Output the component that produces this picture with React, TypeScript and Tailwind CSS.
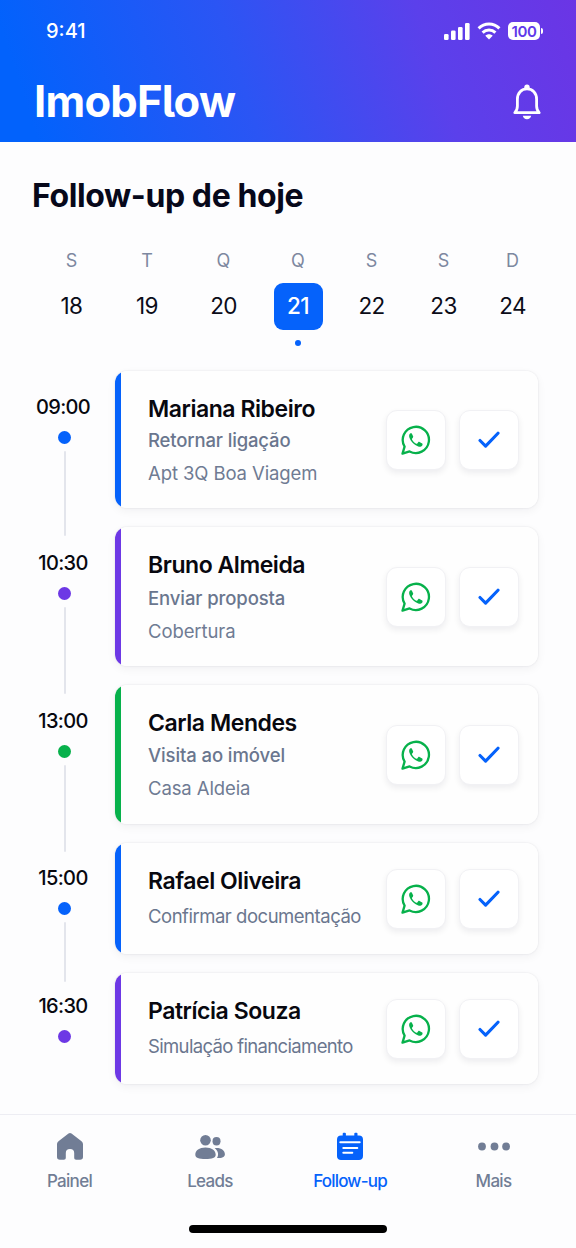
import clsx from "clsx";
import type { ReactNode } from "react";

type Task = {
  time: string;
  name: string;
  action: string;
  place?: string;
  row: string;
  head: string;
  actionClass: string;
  bar: string;
  dot: string;
};

const DAYS = [
  { letter: "S", day: 18, width: "w-[75px]" },
  { letter: "T", day: 19, width: "w-[76px]" },
  { letter: "Q", day: 20, width: "w-[77px]" },
  { letter: "Q", day: 21, width: "w-[72px]", active: true },
  { letter: "S", day: 22, width: "w-[75px]" },
  { letter: "S", day: 23, width: "w-[69px]" },
  { letter: "D", day: 24, width: "w-[69px]" },
];

const TASKS: Task[] = [
  {
    time: "09:00",
    name: "Mariana Ribeiro",
    action: "Retornar ligação",
    place: "Apt 3Q Boa Viagem",
    row: "h-[137px]",
    head: "pt-6",
    actionClass: "mt-[5px] font-medium tracking-[-0.15px]",
    bar: "bg-[#0562fb]",
    dot: "bg-[#0562fb]",
  },
  {
    time: "10:30",
    name: "Bruno Almeida",
    action: "Enviar proposta",
    place: "Cobertura",
    row: "h-[139px]",
    head: "pt-6",
    actionClass: "mt-[7px] font-medium tracking-[-0.1px]",
    bar: "bg-[#6d38e5]",
    dot: "bg-[#6d38e5]",
  },
  {
    time: "13:00",
    name: "Carla Mendes",
    action: "Visita ao imóvel",
    place: "Casa Aldeia",
    row: "h-[139px]",
    head: "pt-6",
    actionClass: "mt-[6px] font-medium tracking-[-0.1px]",
    bar: "bg-[#07b14b]",
    dot: "bg-[#07b14b]",
  },
  {
    time: "15:00",
    name: "Rafael Oliveira",
    action: "Confirmar documentação",
    row: "h-[111px]",
    head: "pt-[23px]",
    actionClass: "mt-[9px] tracking-[-0.48px]",
    bar: "bg-[#0562fb]",
    dot: "bg-[#0562fb]",
  },
  {
    time: "16:30",
    name: "Patrícia Souza",
    action: "Simulação financiamento",
    row: "h-[111px]",
    head: "pt-[21px]",
    actionClass: "mt-[9px] tracking-[-0.65px]",
    bar: "bg-[#6d38e5]",
    dot: "bg-[#6d38e5]",
  },
];

function StatusIcons() {
  return (
    <div className="flex items-center text-white">
      <svg width="26" height="17" viewBox="0 0 26 17" fill="currentColor">
        <rect x="0" y="11" width="4.6" height="6" rx="1.3" />
        <rect x="7" y="7.5" width="4.6" height="9.5" rx="1.3" />
        <rect x="14" y="4" width="4.6" height="13" rx="1.3" />
        <rect x="21" y="0" width="4.6" height="17" rx="1.3" />
      </svg>
      <svg
        className="ml-[7px]"
        width="24"
        height="18"
        viewBox="0 0 24 18"
        fill="none"
        stroke="currentColor"
        strokeWidth="3"
      >
        <path d="M1.600 6.400C7.400.6 16.600.6 22.400 6.400" />
        <path d="M5.600 10.600c3.600-3.500 9.200-3.500 12.800 0" />
        <path
          d="M12 17.400 8.300 13.800c2-2 5.400-2 7.400 0Z"
          fill="currentColor"
          stroke="none"
        />
      </svg>
      <div className="ml-[7px] flex h-[18px] w-8 items-center justify-center rounded-[5px] bg-white text-[15px] leading-none font-semibold tracking-[-0.4px] text-[#6039ea]">
        100
      </div>
      <div className="ml-px h-[6px] w-[2px] rounded-r-full bg-white" />
    </div>
  );
}

function BellIcon() {
  return (
    <svg width="30" height="36" viewBox="0 0 30 36" fill="none">
      <circle cx="15" cy="3.300" r="2.700" fill="white" />
      <path
        d="M2.800 28.700c1.600-1.600 2.600-3.700 2.600-6.700v-6.800C5.400 9 9.500 4.900 15 4.900s9.600 4.100 9.600 10.300V22c0 3 1 5.100 2.600 6.700Z"
        stroke="white"
        strokeWidth="2.800"
        strokeLinejoin="round"
      />
      <path d="M10.800 31.800h8.400c-.5 2.100-2 3.400-4.200 3.400s-3.700-1.300-4.200-3.400Z" fill="white" />
    </svg>
  );
}

function WhatsAppIcon() {
  return (
    <svg width="30" height="30" viewBox="0 0 30 30" fill="none">
      <path
        d="M1.500 28.600 3.600 21.600A13.100 13.100 0 1 1 8.600 26.400Z"
        stroke="#07b14b"
        strokeWidth="2.300"
        strokeLinejoin="round"
      />
      <path
        d="M10.800 8.600c-.4-.6-1.200-.6-1.700-.1-1 1-1.200 2.600-.7 4.100 1.400 4.200 4.800 7.600 8.900 8.900 1.500.5 3.200.1 4-1.100.4-.7.4-1.500-.1-1.900l-2.700-1.500c-.5-.3-1-.1-1.300.3l-.9 1.200c-.3.3-.6.4-1 .2-1.900-.9-3.400-2.500-4.300-4.300-.2-.4-.1-.7.200-1l.8-1c.3-.4.3-.8.1-1.200Z"
        fill="#07b14b"
      />
    </svg>
  );
}

function CheckIcon() {
  return (
    <svg width="22" height="18" viewBox="0 0 22 18" fill="none">
      <path
        d="m2 9.500 5.600 5.600L20 2.200"
        stroke="#0562fb"
        strokeWidth="3.100"
        strokeLinecap="round"
        strokeLinejoin="round"
      />
    </svg>
  );
}

function IconButton({ label, children }: { label: string; children: ReactNode }) {
  return (
    <button
      aria-label={label}
      className="flex size-[60px] items-center justify-center rounded-[11px] border border-[#f1f1f4] bg-white shadow-[0_3px_6px_rgba(20,20,40,0.07)]"
    >
      {children}
    </button>
  );
}

function TaskRow({ task, last }: { task: Task; last: boolean }) {
  return (
    <div className={clsx("flex", task.row)}>
      {/* Timeline */}
      <div className={clsx("flex w-[61px] flex-col items-center", task.head)}>
        <span className="pr-[3px] text-[20px] leading-6 font-medium tracking-[-0.65px] text-[#07080f]">
          {task.time}
        </span>
        <span className={clsx("mt-3 size-[13px] shrink-0 rounded-full", task.dot)} />
        {!last && (
          <span className="mt-[7px] -mb-[28px] w-[2px] flex-1 rounded-full bg-[#e3e5ec]" />
        )}
      </div>

      {/* Card */}
      <div className="ml-[20px] flex w-[423px] overflow-hidden rounded-xl shadow-[0_3px_10px_rgba(20,20,40,0.05),0_0_2px_rgba(20,20,40,0.12)]">
        <div className={clsx("w-[6px] shrink-0", task.bar)} />
        <div className="flex flex-1 items-center bg-[#fefefe] pr-[19.5px] pl-[27px]">
          <div className="flex-1 self-start pt-[23.5px] whitespace-nowrap">
            <h2 className="text-[23px] leading-7 font-semibold tracking-[-0.45px] text-[#08080f]">
              {task.name}
            </h2>
            <p
              className={clsx(
                "text-[18.5px] leading-6 text-[#6a768e]",
                task.actionClass
              )}
            >
              {task.action}
            </p>
            {task.place && (
              <p className="mt-[9px] text-[18.5px] leading-6 tracking-[-0.1px] text-[#6f7b93]">
                {task.place}
              </p>
            )}
          </div>
          <div className="flex gap-[13px] pt-px">
            <IconButton label="WhatsApp">
              <WhatsAppIcon />
            </IconButton>
            <IconButton label="Concluir">
              <CheckIcon />
            </IconButton>
          </div>
        </div>
      </div>
    </div>
  );
}

function NavItem({
  label,
  width,
  active,
  children,
}: {
  label: string;
  width: string;
  active?: boolean;
  children: ReactNode;
}) {
  return (
    <button
      className={clsx(
        "flex flex-col items-center",
        width,
        active ? "text-[#0562fb]" : "text-[#717d95]"
      )}
    >
      <svg width="32" height="30" viewBox="0 0 32 30" fill="currentColor">
        {children}
      </svg>
      <span
        className={clsx(
          "mt-[7px] text-[17px] leading-6 font-medium",
          active ? "tracking-[-0.8px]" : "tracking-[-0.7px]"
        )}
      >
        {label}
      </span>
    </button>
  );
}

function BottomNav() {
  return (
    <nav className="mt-[30px] flex h-[134px] flex-col items-center border-t border-[#ededf3]">
      <div className="flex w-full pt-[17px]">
        <NavItem label="Painel" width="w-[139px]">
          <path d="M14.500 1.500a2.600 2.600 0 0 1 3 0l9.700 7.400c1.200.9 1.800 2 1.800 3.400V25c0 1.700-1.100 2.800-2.800 2.800h-4c-1.300 0-2-.7-2-2V21c0-2.500-1.400-4-4.200-4s-4.200 1.500-4.200 4v4.800c0 1.300-.7 2-2 2h-4C4.100 27.800 3 26.700 3 25V12.300c0-1.400.6-2.500 1.800-3.400Z" />
        </NavItem>
        <NavItem label="Leads" width="w-[142px]">
          <circle cx="11.500" cy="8.300" r="5.300" />
          <ellipse cx="22.500" cy="9.200" rx="4" ry="4.200" />
          <path d="M11.500 15.500c6.200 0 10.200 3 10.200 7.300 0 3-3.500 4.200-10.200 4.200S1.300 25.800 1.300 22.800c0-4.300 4-7.300 10.200-7.300Z" />
          <path d="M20.600 16.100c5.900-.9 10.300 2 10.300 6.100 0 2.700-2.700 3.900-8 3.900 2-2.800 1.600-7.100-2.300-10Z" />
        </NavItem>
        <NavItem label="Follow-up" width="w-[138px]" active>
          <path d="M3 7.500C3 5 4.500 3.500 7 3.500h18c2.500 0 4 1.500 4 4V24c0 2.500-1.500 4-4 4H7c-2.500 0-4-1.500-4-4Z" />
          <rect x="8.700" y=".7" width="3.200" height="5" rx="1" />
          <rect x="20.300" y=".7" width="3.200" height="5" rx="1" />
          <path
            d="M6.300 10.200h19.400M9.300 16h14M9.300 20.800h9"
            stroke="white"
            strokeWidth="2"
            strokeLinecap="round"
          />
        </NavItem>
        <NavItem label="Mais" width="w-[149px]">
          <circle cx="4" cy="14.500" r="3.900" />
          <circle cx="16.500" cy="14.500" r="3.900" />
          <circle cx="28.100" cy="14.500" r="3.900" />
        </NavItem>
      </div>
      <div className="mt-[32px] h-2 w-[198px] rounded-full bg-black" />
    </nav>
  );
}

export default function App() {
  return (
    <div className="h-[1248px] w-[576px] overflow-hidden bg-[#fdfdfe] font-['Inter',sans-serif]">
      <header className="h-[142px] bg-[linear-gradient(72deg,#0262fc_0%,#0262fc_6%,#2b55f4_42%,#5b40eb_74%,#6b35e5_100%)]">
        <div className="flex items-center justify-between pt-[21px] pr-[33px] pl-[46px]">
          <span className="text-[20px] leading-5 font-medium text-white">
            9:41
          </span>
          <StatusIcons />
        </div>
        <div className="mt-[41px] flex items-center justify-between pr-[34px] pl-[34px]">
          <h1 className="-mt-0.5 text-[43.5px] leading-[42px] font-bold tracking-[-0.75px] text-white [font-feature-settings:'cv05']">
            ImobFlow
          </h1>
          <BellIcon />
        </div>
      </header>

      <main>
        <h2 className="pt-[34px] pl-8 text-[32px] leading-10 font-bold tracking-[-0.4px] text-[#07081a]">
          Follow-up de hoje
        </h2>

        {/* Week */}
        <div className="mt-[33px] flex pl-[34px]">
          {DAYS.map((d) => (
            <div key={d.day} className={clsx("flex flex-col items-center", d.width)}>
              <span className="text-[18px] leading-6 text-[#7d88a0]">{d.letter}</span>
              <span
                className={clsx(
                  "mt-[10px] flex h-[47px] w-[49px] items-center justify-center rounded-[9px] text-[22.5px] leading-none tracking-[-0.6px]",
                  d.active ? "bg-[#0562fb] font-medium text-white" : "text-[#0b0c18]"
                )}
              >
                {d.day}
              </span>
              {d.active && (
                <span className="mt-[10px] size-[6px] rounded-full bg-[#0562fb]" />
              )}
            </div>
          ))}
        </div>

        <div className="mt-[25px] flex flex-col gap-[19px] pl-[34px]">
          {TASKS.map((task, i) => (
            <TaskRow key={task.time} task={task} last={i === TASKS.length - 1} />
          ))}
        </div>
      </main>

      <BottomNav />
    </div>
  );
}
